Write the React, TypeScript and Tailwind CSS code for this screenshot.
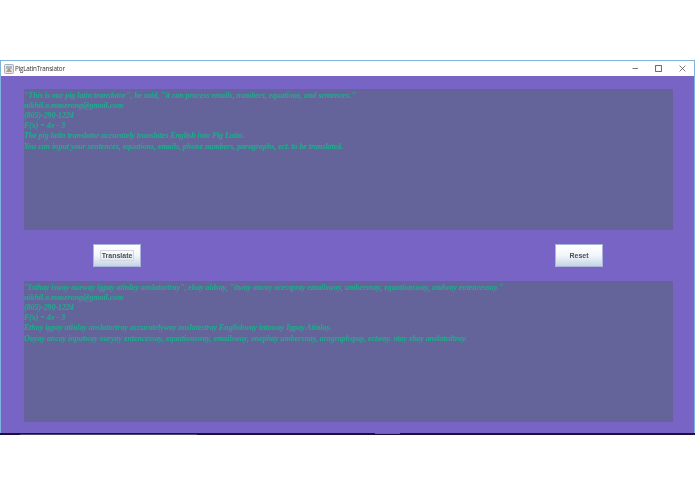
const serif = "font-['Liberation_Serif',serif]";

const topText = [
  '"This is our pig latin translator", he said, "it can process emails, numbers, equations, and sentences."',
  'nikhil.o.maserang@gmail.com',
  '(805)-290-1224',
  'F(x) = 4x - 3',
  'The pig latin translator accurately translates English into Pig Latin.',
  'You can input your sentences, equations, emails, phone numbers, paragraphs, ect. to be translated.',
];

const bottomText = [
  '"Ixthay isway ourway igpay atinlay anslatortray", ehay aidsay, "itway ancay ocesspray emailsway, umbersnay, equationsway, andway entencessay."',
  'nikhil.o.maserang@gmail.com',
  '(805)-290-1224',
  'F(x) = 4x - 3',
  'Ethay igpay atinlay anslatortray accuratelyway anslatestray Englishway intoway Igpay Atinlay.',
  'Ouyay ancay inputway ouryay entencessay, equationsway, emailsway, onephay umbersnay, aragraphspay, ectway. otay ebay anslatedtray.',
];

function TextPanel({ lines }: { lines: string[] }) {
  return (
    <div className="h-[141px] bg-[#64649a] pt-[0.5px] overflow-hidden">
      {lines.map((l) => (
        <div
          key={l}
          className={`${serif} origin-left scale-x-[0.855] whitespace-nowrap text-[9.2px] leading-[10.2px] font-bold italic text-[#24a98e] [-webkit-text-stroke:0.1px_#24a98e] blur-[0.3px]`}
        >
          {l}
        </div>
      ))}
    </div>
  );
}

function JavaButton({ label, focused }: { label: string; focused?: boolean }) {
  return (
    <button className="flex h-[23px] w-[48px] items-center justify-center border border-[#a9b4d8] bg-gradient-to-b from-white via-[#f2f6fa] to-[#c4d4e6]">
      <span
        className={`font-['Liberation_Sans',sans-serif] text-[7px] leading-[9px] font-bold text-[#4a4e58] blur-[0.3px] px-px ${
          focused ? 'outline outline-1 outline-[#d4d8de]' : ''
        }`}
      >
        {label}
      </span>
    </button>
  );
}

export default function App() {
  return (
    <div className="flex h-[494px] w-[695px] flex-col overflow-hidden bg-white">
      <div className="h-[60px] shrink-0" />
      <div className="flex shrink-0 flex-col border-x border-t border-[#7fb2dc]">
        <div className="flex h-[15px] items-center bg-white pl-[3px] pr-[8px]">
          <svg width="10" height="10" viewBox="0 0 10 10" className="shrink-0">
            <rect x="0.5" y="0.5" width="9" height="9" rx="1" fill="#e8e6e0" stroke="#9aa0a8" strokeWidth="0.8" />
            <rect x="2" y="2" width="6" height="3" fill="#9cc0dc" />
            <path d="M2 8 L5 3.5 L8 8 Z" fill="#c89860" />
          </svg>
          <span className="ml-[1px] font-['Open_Sans',sans-serif] text-[6.3px] leading-[9px] tracking-[-0.2px] text-[#333] blur-[0.2px]">
            PigLatinTranslator
          </span>
          <div className="ml-auto flex items-center gap-[16px] text-[#555]">
            <svg width="7" height="7" viewBox="0 0 7 7">
              <path d="M0.5 3.5 H6" stroke="#666" strokeWidth="0.9" />
            </svg>
            <svg width="7" height="7" viewBox="0 0 7 7">
              <rect x="0.6" y="0.6" width="5.8" height="5.8" fill="none" stroke="#555" strokeWidth="0.9" />
            </svg>
            <svg width="7" height="7" viewBox="0 0 7 7" className="ml-[1px]">
              <path d="M0.6 0.6 L6.4 6.4 M6.4 0.6 L0.6 6.4" stroke="#555" strokeWidth="0.8" />
            </svg>
          </div>
        </div>
        <div className="flex h-[357px] flex-col bg-[#7864c4] pl-[23px] pr-[21px] pt-[13px]">
          <TextPanel lines={topText} />
          <div className="flex h-[51px] items-center justify-between pl-[69px] pr-[69px]">
            <JavaButton label="Translate" focused />
            <div className="-translate-x-px">
              <JavaButton label="Reset" />
            </div>
          </div>
          <TextPanel lines={bottomText} />
        </div>
      </div>
      <div className="flex h-[2px] shrink-0 bg-[#1a1040]">
        <div className="ml-[20px] mt-px h-px w-[177px] bg-[#4a4468]" />
        <div className="ml-[178px] h-px w-[25px] bg-[#6a6488]" />
      </div>
    </div>
  );
}
